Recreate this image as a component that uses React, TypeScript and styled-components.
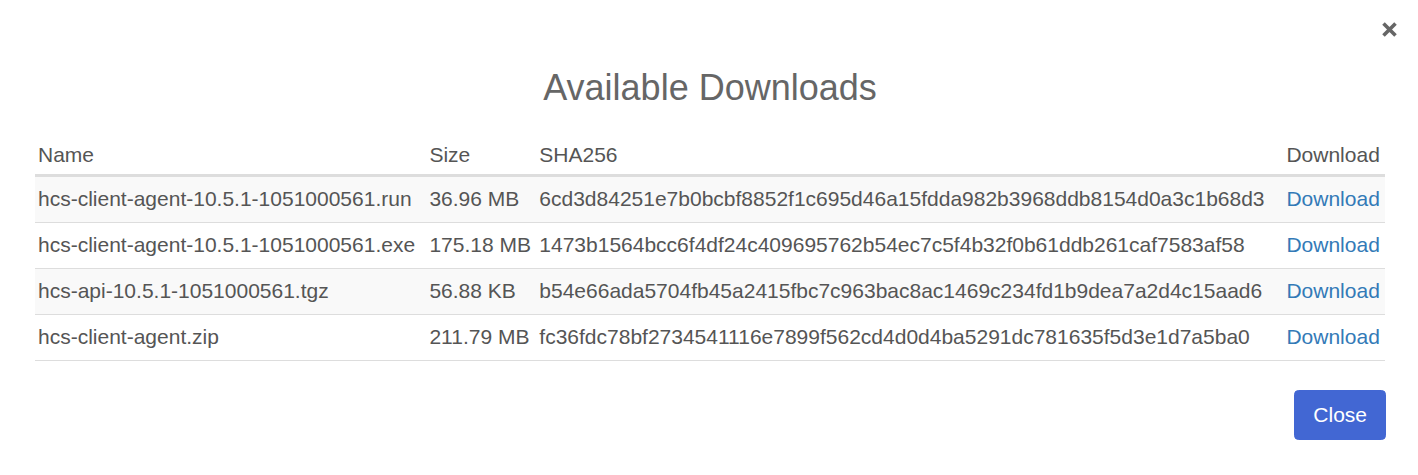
import styled, { createGlobalStyle } from "styled-components";

const GlobalStyle = createGlobalStyle`
  html, body {
    margin: 0;
    padding: 0;
    background: #ffffff;
  }
  body {
    font-family: "Liberation Sans", Arial, Helvetica, sans-serif;
    color: #555;
  }
`;

const Dialog = styled.div`
  display: flex;
  flex-direction: column;
  padding: 22px 21px 36px 35px;
  box-sizing: border-box;
  width: 1418px;
`;

const TopBar = styled.div`
  display: flex;
  justify-content: flex-end;
  height: 15px;
`;

const CloseX = styled.button`
  display: flex;
  align-items: center;
  justify-content: center;
  width: 15px;
  height: 15px;
  padding: 0;
  border: 0;
  background: transparent;
  cursor: pointer;
`;

const Title = styled.h3`
  margin: 31px 12px 0 0;
  font-size: 36px;
  line-height: 39.6px;
  font-weight: 400;
  color: #666;
  text-align: center;
`;

const Table = styled.table`
  width: calc(100% - 12px);
  margin-top: 23.4px;
  border-collapse: collapse;
  border-spacing: 0;
  font-size: 21px;
  line-height: 30px;
  color: #555;
`;

const HeadCell = styled.th`
  padding: 9.5px 3px 3.5px;
  text-align: left;
  font-weight: 400;
  vertical-align: bottom;
  white-space: nowrap;
  border-bottom: 3px solid #ddd;
`;

const Row = styled.tr<{ $striped: boolean }>`
  background: ${(p) => (p.$striped ? "#f9f9f9" : "transparent")};
`;

const Cell = styled.td`
  padding: 7.5px 3px;
  white-space: nowrap;
  border-bottom: 1.5px solid #ddd;
`;

const DownloadLink = styled.a`
  color: #337ab7;
  text-decoration: none;
  cursor: pointer;
`;

const Footer = styled.div`
  display: flex;
  justify-content: flex-end;
  margin: 29px 11px 0 0;
`;

const CloseButton = styled.button`
  font-family: "Liberation Sans", Arial, Helvetica, sans-serif;
  font-size: 21px;
  line-height: 30px;
  padding: 9px 18px;
  border: 1.5px solid #4267d3;
  border-radius: 4.5px;
  background: #4267d3;
  color: #ffffff;
  cursor: pointer;
`;

const files = [
  {
    name: "hcs-client-agent-10.5.1-1051000561.run",
    size: "36.96 MB",
    sha: "6cd3d84251e7b0bcbf8852f1c695d46a15fdda982b3968ddb8154d0a3c1b68d3",
  },
  {
    name: "hcs-client-agent-10.5.1-1051000561.exe",
    size: "175.18 MB",
    sha: "1473b1564bcc6f4df24c409695762b54ec7c5f4b32f0b61ddb261caf7583af58",
  },
  {
    name: "hcs-api-10.5.1-1051000561.tgz",
    size: "56.88 KB",
    sha: "b54e66ada5704fb45a2415fbc7c963bac8ac1469c234fd1b9dea7a2d4c15aad6",
  },
  {
    name: "hcs-client-agent.zip",
    size: "211.79 MB",
    sha: "fc36fdc78bf2734541116e7899f562cd4d0d4ba5291dc781635f5d3e1d7a5ba0",
  },
];

export default function App() {
  return (
    <>
      <GlobalStyle />
      <Dialog>
        <TopBar>
          <CloseX aria-label="Close">
            <svg width="15" height="15" viewBox="0 0 15 15">
              <path
                d="M1.5 1.5 L13.5 13.5 M13.5 1.5 L1.5 13.5"
                stroke="#666"
                strokeWidth="3.6"
                strokeLinecap="butt"
              />
            </svg>
          </CloseX>
        </TopBar>
        <Title>Available Downloads</Title>
        <Table>
          <thead>
            <tr>
              <HeadCell>Name</HeadCell>
              <HeadCell>Size</HeadCell>
              <HeadCell>SHA256</HeadCell>
              <HeadCell>Download</HeadCell>
            </tr>
          </thead>
          <tbody>
            {files.map((f, i) => (
              <Row key={f.name} $striped={i % 2 === 0}>
                <Cell>{f.name}</Cell>
                <Cell>{f.size}</Cell>
                <Cell>{f.sha}</Cell>
                <Cell>
                  <DownloadLink>Download</DownloadLink>
                </Cell>
              </Row>
            ))}
          </tbody>
        </Table>
        <Footer>
          <CloseButton>Close</CloseButton>
        </Footer>
      </Dialog>
    </>
  );
}
